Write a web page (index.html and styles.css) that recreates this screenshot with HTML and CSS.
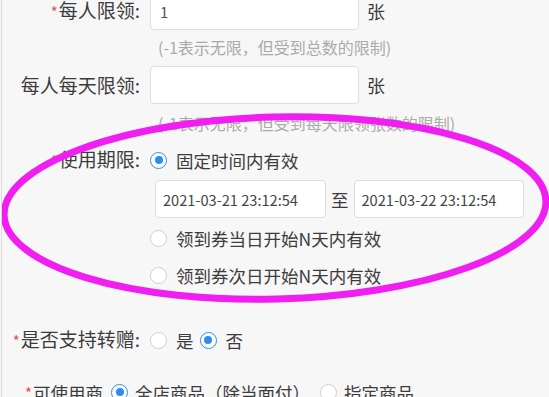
FILE: index.html
```html
<!DOCTYPE html>
<html lang="zh-CN">
<head>
<meta charset="utf-8">
<title>优惠券设置</title>
<link rel="stylesheet" href="styles.css">
</head>
<body>
<div class="page">
  <div class="form">
    <div class="row row-input">
      <div class="lbl"><span class="req">*</span>每人限领:</div>
      <div class="ctl"><div class="input">1</div><span class="unit">张</span></div>
    </div>
    <div class="row row-hint hint1">
      <div></div>
      <div class="hint">(-1表示无限，但受到总数的限制)</div>
    </div>
    <div class="row row-input row2">
      <div class="lbl">每人每天限领:</div>
      <div class="ctl"><div class="input"></div><span class="unit">张</span></div>
    </div>
    <div class="row row-hint hint2">
      <div></div>
      <div class="hint">(-1表示无限，但受到每天限领张数的限制)</div>
    </div>
    <div class="row row-radio row3">
      <div class="lbl"><span class="req">*</span>使用期限:</div>
      <div class="ctl"><span class="radio on"></span><span class="rtext">固定时间内有效</span></div>
    </div>
    <div class="row row-dates">
      <div></div>
      <div class="ctl dates">
        <div class="input date">2021-03-21 23:12:54</div>
        <span class="to">至</span>
        <div class="input date date2">2021-03-22 23:12:54</div>
      </div>
    </div>
    <div class="row row-radio opt1">
      <div></div>
      <div class="ctl"><span class="radio"></span><span class="rtext">领到券当日开始N天内有效</span></div>
    </div>
    <div class="row row-radio opt2">
      <div></div>
      <div class="ctl"><span class="radio"></span><span class="rtext">领到券次日开始N天内有效</span></div>
    </div>
    <div class="row row-radio row5">
      <div class="lbl"><span class="req">*</span>是否支持转赠:</div>
      <div class="ctl"><span class="radio"></span><span class="rtext">是</span><span class="radio on"></span><span class="rtext">否</span></div>
    </div>
    <div class="row6">
      <span class="req">*</span><span class="lbl6">可使用商</span>
      <span class="radio on"></span><span class="rtext t6">全店商品（除当面付）</span>
      <span class="radio"></span><span class="rtext">指定商品</span>
    </div>
  </div>
  <svg class="mark" width="549" height="397" viewBox="0 0 549 397">
    <ellipse cx="275" cy="208" rx="271" ry="91" transform="rotate(-1.5 275 208)" fill="none" stroke="#f01ef0" stroke-width="7"/>
  </svg>
</div>
</body>
</html>
```

FILE: styles.css
```css
html, body {
  margin: 0;
  padding: 0;
  background: #f7f7f7;
}
body {
  font-family: "Noto Sans CJK SC", "Microsoft YaHei", sans-serif;
  font-size: 17.5px;
  color: #3c3c3c;
}
.page {
  position: relative;
  height: 397px;
  overflow: hidden;
  margin-left: 1px;
  border-left: 1px solid #dcdcdc;
}
.form {
  margin-top: -8px;
}
.row {
  display: grid;
  grid-template-columns: 138px auto;
  column-gap: 10px;
  align-items: center;
}
.lbl {
  text-align: right;
  white-space: nowrap;
  line-height: 24px;
  font-size: 19px;
}
.req {
  color: #e2504f;
  font-size: 15px;
  margin-right: 1px;
}
.ctl {
  display: flex;
  align-items: center;
}
.row-input { height: 38px; }
.input {
  box-sizing: border-box;
  width: 209px;
  height: 38px;
  background: #fff;
  border: 1px solid #dedede;
  border-radius: 4px;
  padding: 0 9px;
  display: flex;
  align-items: center;
  font-size: 15px;
  color: #555;
}
.unit {
  margin-left: 8px;
  font-size: 18px;
}
.row-hint { line-height: 20px; }
.hint {
  padding-left: 8px;
  font-size: 16px;
  color: #aaa;
  white-space: nowrap;
}
.hint1 { margin-top: 7px; }
.row2 { margin-top: 9px; }
.hint2 { margin-top: 9px; }
.row-radio { height: 26px; }
.row3 { margin-top: 14px; }
.row-dates { margin-top: 7px; }
.dates { margin-left: 5px; }
.date {
  width: 171px;
  height: 38px;
  padding: 0 7px;
  font-size: 14.6px;
  color: #444;
}
.date2 { width: 170px; }
.to { margin: 0 5px; }
.opt1 { margin-top: 7px; }
.opt2 { margin-top: 11px; }
.row5 { margin-top: 39px; }
.radio {
  box-sizing: border-box;
  width: 17px;
  height: 17px;
  border-radius: 50%;
  border: 1px solid #cfcfcf;
  background: #fff;
  flex: none;
  margin-right: 9px;
  position: relative;
}
.radio.on {
  border-color: #2d8cf0;
}
.radio.on::after {
  content: "";
  position: absolute;
  left: 3.5px;
  top: 3.5px;
  width: 8px;
  height: 8px;
  border-radius: 50%;
  background: #2d8cf0;
}
.rtext {
  margin-right: 6px;
  white-space: nowrap;
}
.row6 {
  margin-top: 26px;
  height: 26px;
  display: flex;
  align-items: center;
  padding-left: 23px;
}
.lbl6 { margin-right: 8px; }
.row6 .rtext { margin-right: 10px; }
.row6 .radio { margin-right: 7px; }
.mark {
  position: absolute;
  left: -2px;
  top: 0;
  pointer-events: none;
}
```
